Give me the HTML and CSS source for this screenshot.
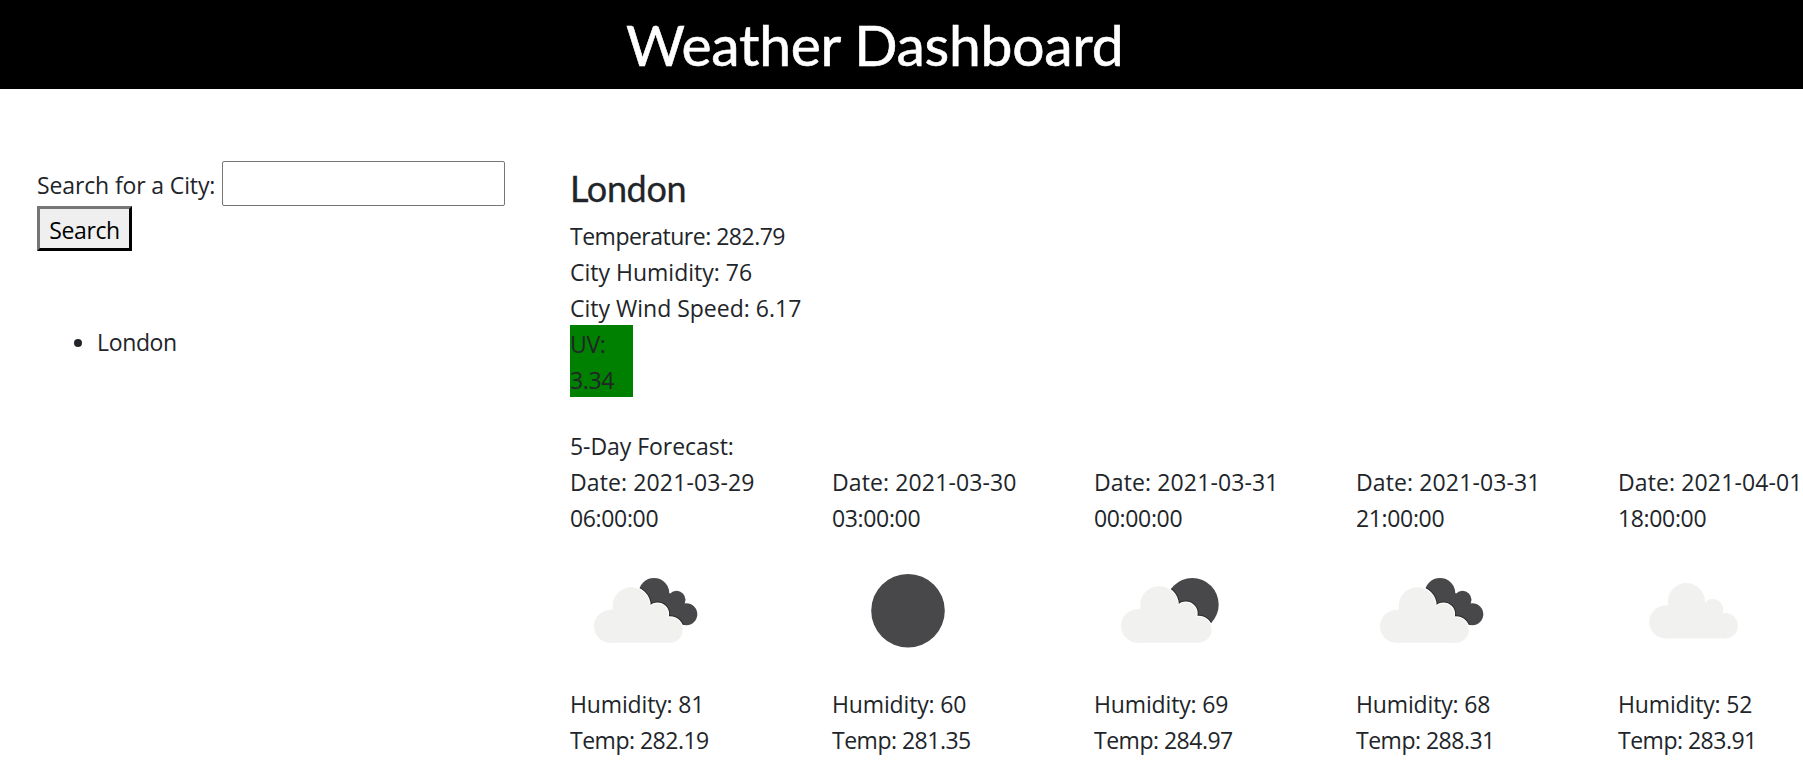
FILE: index.html
```html
<!DOCTYPE html>
<html lang="en">
<head>
<meta charset="utf-8">
<title>Weather Dashboard</title>
<link rel="stylesheet" href="styles.css">
</head>
<body>
<svg class="defs" aria-hidden="true">
  <defs>
    <g id="cloud">
      <circle cx="40.4" cy="91.3" r="16.4"/>
      <circle cx="61.2" cy="70.8" r="18.5"/>
      <circle cx="87.5" cy="79" r="10.6"/>
      <circle cx="100" cy="95" r="12.7"/>
      <path d="M40 75L60 70L87 78L99 90V107.7H40Z"/>
    </g>
    <g id="back-cloud">
      <circle cx="84" cy="58.3" r="15.3"/>
      <circle cx="106.5" cy="64.8" r="9"/>
      <circle cx="116.3" cy="79.3" r="11"/>
      <path d="M84 58L98 57L106 64L115 69L116 78L113 90L84 84Z"/>
    </g>
    <clipPath id="clip-back">
      <circle cx="84" cy="58.3" r="15.3"/>
      <circle cx="106.5" cy="64.8" r="9"/>
      <circle cx="116.3" cy="79.3" r="11"/>
      <path d="M84 58L98 57L106 64L115 69L116 78L113 90L84 84Z"/>
    </clipPath>
    <clipPath id="clip-moon"><circle cx="98.3" cy="69.5" r="26.4"/></clipPath>
    <g id="broken">
      <use href="#back-cloud" class="dark"/>
      <g clip-path="url(#clip-back)"><use href="#cloud" class="shade"/></g>
      <use href="#cloud" class="rim"/>
      <use href="#cloud" class="light"/>
    </g>
  </defs>
</svg>
<header class="banner"><h1 class="title">Weather Dashboard</h1></header>
<main class="layout">
  <aside class="sidebar">
    <form class="search">
      <label class="label" for="city">Search for a City:</label>
      <input class="field" id="city" type="text">
      <button class="button" type="button">Search</button>
    </form>
    <ul class="history"><li>London</li></ul>
  </aside>
  <section class="results">
    <h3 class="city">London</h3>
    <div class="tight">Temperature: 282.79</div>
    <div class="loose">City Humidity: 76</div>
    <div class="loose">City Wind Speed: 6.17</div>
    <div class="uv">UV: 3.34</div>
    <div class="heading">5-Day Forecast:</div>
    <div class="forecast">
      <div class="day">
        <div class="date"><span class="ymd">Date: 2021-03-29</span><br>06:00:00</div>
        <svg class="icon" viewBox="0 0 150 150"><use href="#broken"/></svg>
        <div class="humidity">Humidity: 81</div><div class="tight">Temp: 282.19</div>
      </div>
      <div class="day">
        <div class="date"><span class="ymd">Date: 2021-03-30</span><br>03:00:00</div>
        <svg class="icon" viewBox="0 0 150 150"><circle class="dark" cx="76" cy="75.7" r="36.8"/></svg>
        <div class="humidity">Humidity: 60</div><div class="tight">Temp: 281.35</div>
      </div>
      <div class="day">
        <div class="date"><span class="ymd">Date: 2021-03-31</span><br>00:00:00</div>
        <svg class="icon" viewBox="0 0 150 150">
          <circle class="dark" cx="98.3" cy="69.5" r="26.4"/>
          <g clip-path="url(#clip-moon)"><use href="#cloud" class="shade" transform="translate(2.6 -2.2) scale(1.02)"/></g>
          <use href="#cloud" class="rim" transform="translate(2.6 -2.2) scale(1.02)"/>
          <use href="#cloud" class="light" transform="translate(2.6 -2.2) scale(1.02)"/>
        </svg>
        <div class="humidity">Humidity: 69</div><div class="tight">Temp: 284.97</div>
      </div>
      <div class="day">
        <div class="date"><span class="ymd">Date: 2021-03-31</span><br>21:00:00</div>
        <svg class="icon" viewBox="0 0 150 150"><use href="#broken"/></svg>
        <div class="humidity">Humidity: 68</div><div class="tight">Temp: 288.31</div>
      </div>
      <div class="day">
        <div class="date"><span class="ymd">Date: 2021-04-01</span><br>18:00:00</div>
        <svg class="icon" viewBox="0 0 150 150"><use href="#cloud" class="light" transform="translate(7.2 -4.3)"/></svg>
        <div class="humidity">Humidity: 52</div><div class="tight">Temp: 283.91</div>
      </div>
    </div>
  </section>
</main>
</body>
</html>
```

FILE: styles.css
```css
* { box-sizing: border-box; }
html { overflow: hidden; }
body {
  margin: 0;
  background: #fff;
  color: #212529;
  font: 23px/36px "Open Sans", sans-serif;
  letter-spacing: -0.35px;
}
.defs { display: block; width: 0; height: 0; }
.banner { height: 89px; padding: 8px 0 0 626px; background: #000; }
.title {
  margin: 0;
  color: #fff;
  font: 400 57px/72px Lato, sans-serif;
  letter-spacing: -0.27px;
  white-space: nowrap;
  -webkit-text-stroke: 0.6px #fff;
}
.layout { display: flex; }
.sidebar { flex: none; width: 570px; padding: 72px 0 0 37px; }
.search { display: grid; grid-template-columns: 185px 283px; }
.label { padding-top: 6px; white-space: nowrap; letter-spacing: -0.13px; }
.field { height: 45px; border: 1px solid #767676; border-radius: 2px; }
.button {
  width: 95px;
  height: 45px;
  padding: 2px 0 0;
  border: 3px outset #767676;
  border-color: #767676 #212121 #212121 #767676;
  background: #efefef;
  color: #000;
  font: inherit;
  letter-spacing: inherit;
}
.history { margin: 73px 0 0; padding: 0 0 0 60px; }
.results { flex: none; padding-top: 78px; }
.city {
  margin: 0 0 9px;
  font: 400 36px/42px Lato, sans-serif;
  -webkit-text-stroke: 0.3px #212529;
}
.tight { letter-spacing: -0.5px; }
.loose { letter-spacing: 0; }
.uv { width: 63px; height: 72px; margin-top: -1px; padding-top: 1px; background: green; }
.heading { margin-top: 31px; letter-spacing: -0.05px; }
.forecast { display: grid; grid-template-columns: repeat(5, 262px); }
.date { white-space: nowrap; }
.ymd { letter-spacing: 0.12px; }
.icon { display: block; width: 150px; height: 150px; margin: -1px 0 1px; }
.humidity { letter-spacing: -0.15px; }
.dark { fill: #48484a; }
.light { fill: #f1f1ef; }
.shade { fill: #2b2b2d; stroke: #2b2b2d; stroke-width: 4px; }
.rim { fill: #fff; stroke: #fff; stroke-width: 2px; }
```
